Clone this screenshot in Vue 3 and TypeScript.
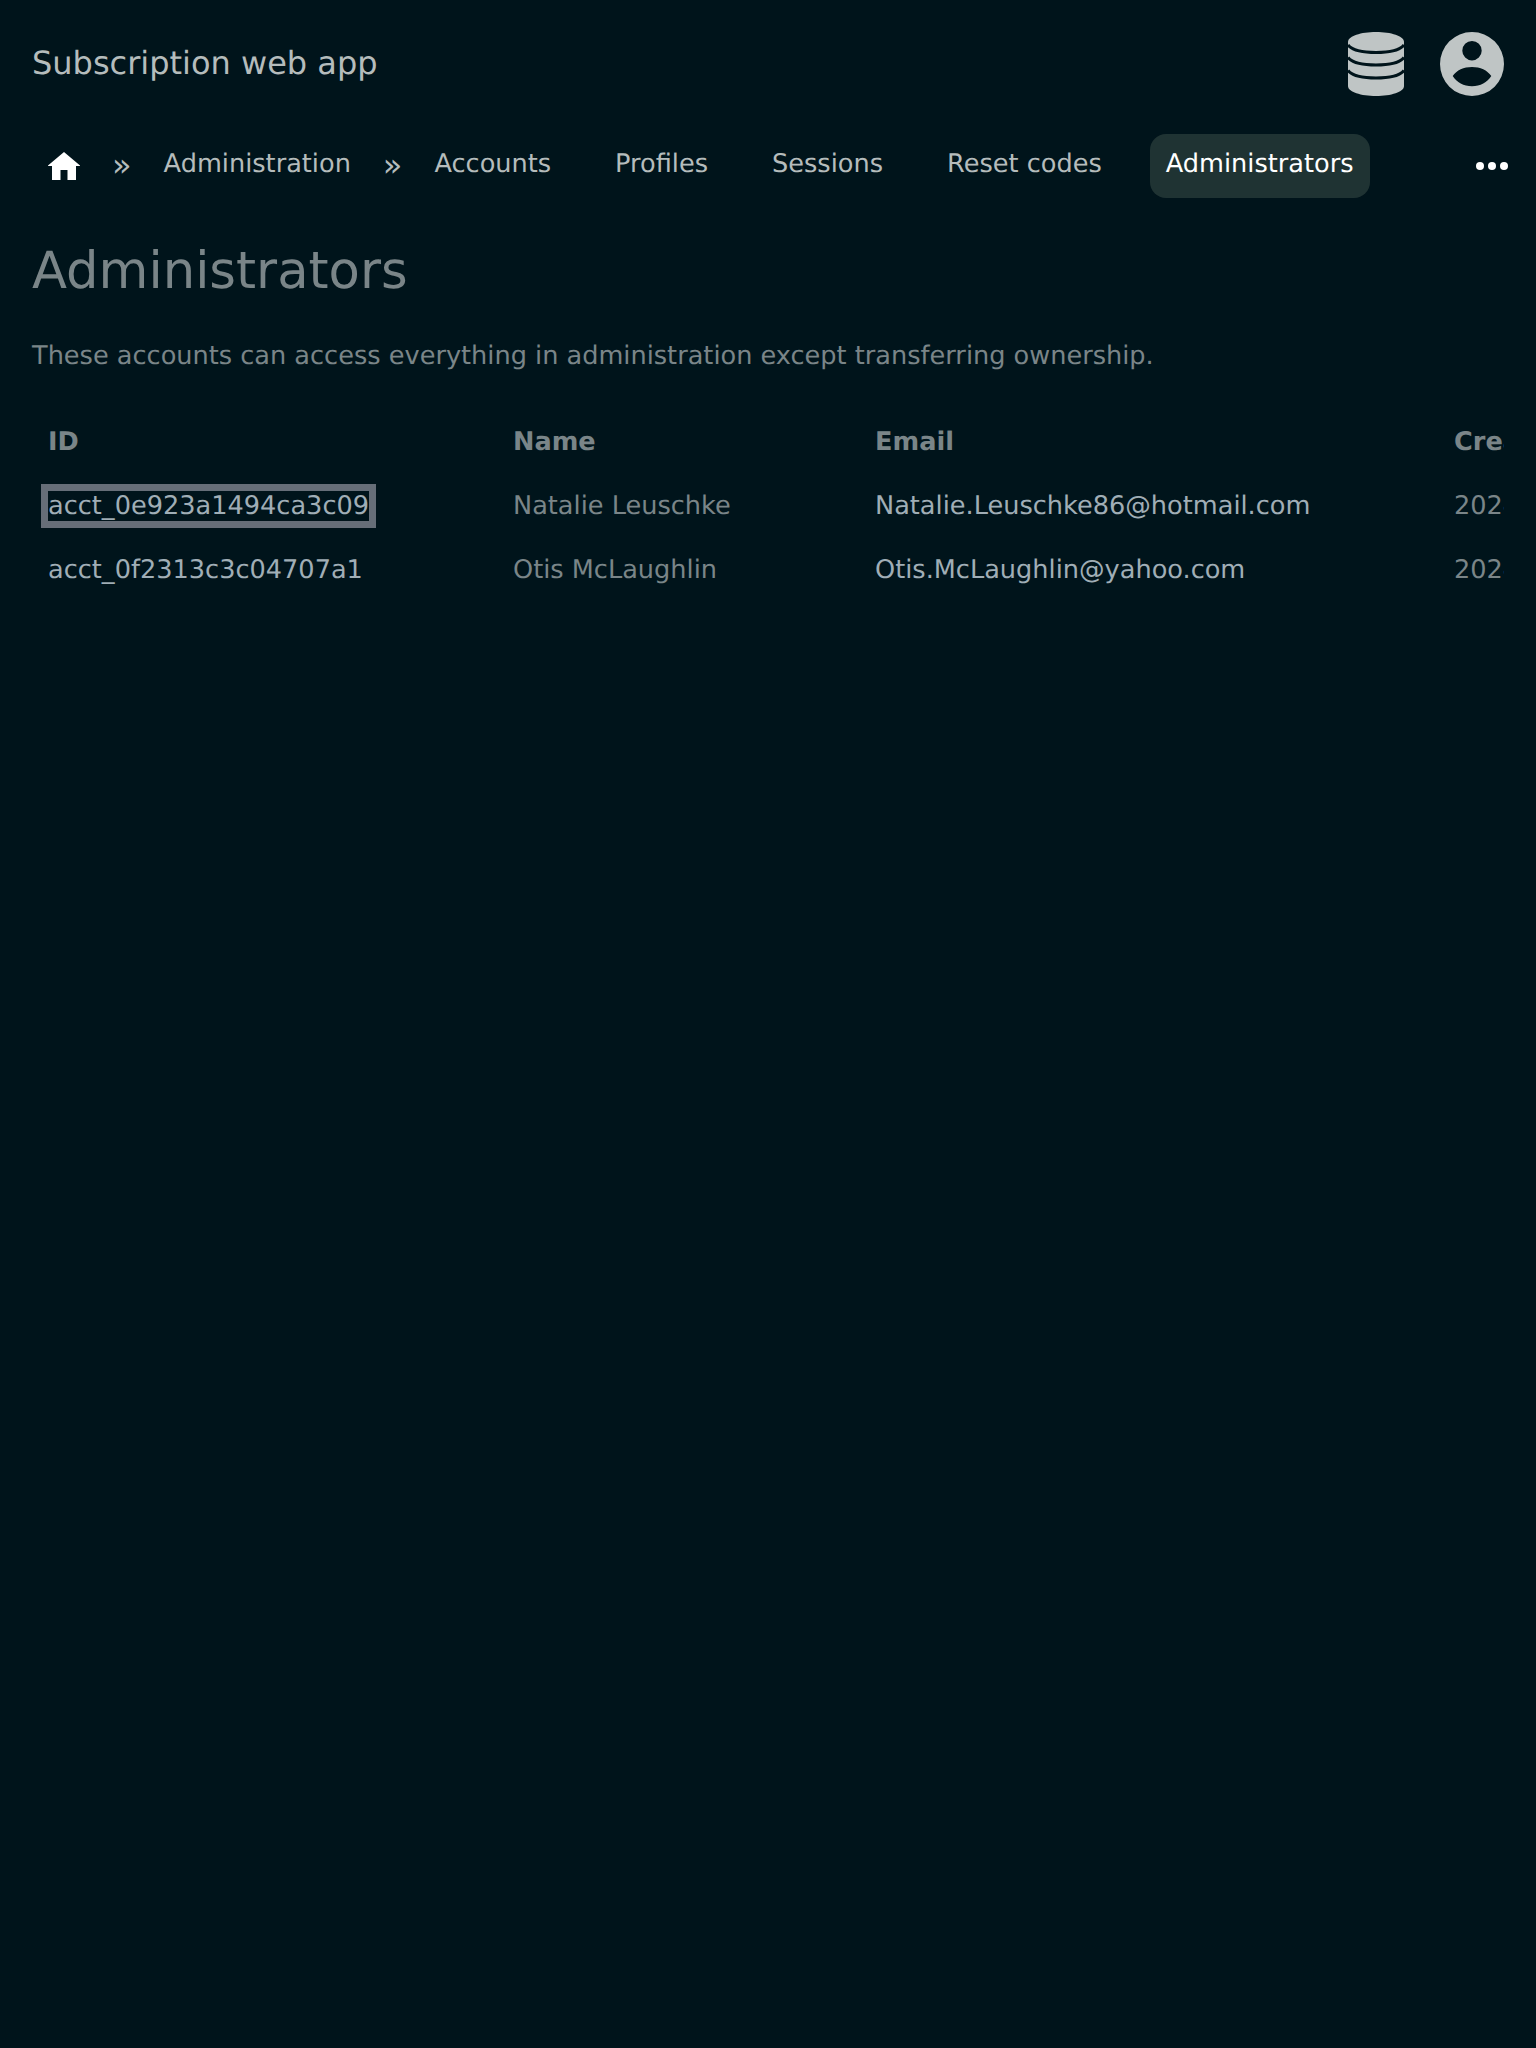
<script setup lang="ts">
interface Admin {
  id: string
  name: string
  email: string
  created: string
}

const tabs: string[] = ['Accounts', 'Profiles', 'Sessions', 'Reset codes', 'Administrators']

const admins: Admin[] = [
  { id: 'acct_0e923a1494ca3c09', name: 'Natalie Leuschke', email: 'Natalie.Leuschke86@hotmail.com', created: '2024-02-11' },
  { id: 'acct_0f2313c3c04707a1', name: 'Otis McLaughlin', email: 'Otis.McLaughlin@yahoo.com', created: '2024-06-27' },
]
</script>

<template>
  <div class="page">
    <header class="top">
      <span class="brand">Subscription web app</span>
      <div class="top-icons">
        <svg class="db" viewBox="0 0 56 64" aria-hidden="true">
          <path d="M0 10C0 4 13 0 28 0s28 4 28 10v44c0 6-13 10-28 10S0 60 0 54z" />
          <path class="db-line" d="M0 13c4 5 15 7.500 28 7.500s24-2.500 28-7.500" />
          <path class="db-line" d="M0 25.500c4 5 15 7.500 28 7.500s24-2.500 28-7.500" />
          <path class="db-line" d="M0 38.500c4 5 15 7.500 28 7.500s24-2.500 28-7.500" />
        </svg>
        <svg class="user" viewBox="0 0 64 64" aria-hidden="true">
          <path
            fill-rule="evenodd"
            d="M32 0a32 32 0 1 1 0 64a32 32 0 1 1 0-64zM32 9a9.700 9.700 0 1 0 0 19.400a9.700 9.700 0 1 0 0-19.400zM12.700 44c4 6.500 11 10.300 19.300 10.300s15.300-3.800 19.300-10.300c-4-5.800-11-9-19.300-9s-15.300 3.200-19.300 9z"
          />
        </svg>
      </div>
    </header>

    <nav class="nav">
      <a class="tab home" href="#">
        <svg viewBox="0 0 32 28" aria-hidden="true">
          <path d="M16 0L32 13.500V14H28V28H19.500V18H12.500V28H4V14H0V13.500z" />
        </svg>
      </a>
      <span class="sep">»</span>
      <a class="tab" href="#">Administration</a>
      <span class="sep">»</span>
      <a
        v-for="tab in tabs"
        :key="tab"
        class="tab"
        :class="{ active: tab === 'Administrators' }"
        href="#"
      >{{ tab }}</a>
      <span class="more"><i></i><i></i><i></i></span>
    </nav>

    <main class="content">
      <h1>Administrators</h1>
      <p>These accounts can access everything in administration except transferring ownership.</p>
      <div class="table-wrap">
        <table>
          <colgroup>
            <col class="col-id" />
            <col class="col-name" />
            <col class="col-email" />
            <col class="col-created" />
          </colgroup>
          <thead>
            <tr>
              <th>ID</th>
              <th>Name</th>
              <th>Email</th>
              <th>Created</th>
            </tr>
          </thead>
          <tbody>
            <tr v-for="(admin, i) in admins" :key="admin.id">
              <td><a class="id" :class="{ focused: i === 0 }" href="#">{{ admin.id }}</a></td>
              <td class="muted">{{ admin.name }}</td>
              <td><a class="id" href="#">{{ admin.email }}</a></td>
              <td class="muted">{{ admin.created }}</td>
            </tr>
          </tbody>
        </table>
      </div>
    </main>
  </div>
</template>

<style>
html,
body {
  margin: 0;
  background: #00141b;
}
</style>

<style scoped>
.page {
  min-height: 2048px;
  background: #00141b;
  font-family: "DejaVu Sans", sans-serif;
  font-size: 25.6px;
  color: #b5bcbc;
  text-rendering: geometricPrecision;
}

.top {
  display: flex;
  align-items: center;
  justify-content: space-between;
  height: 128px;
  padding: 0 32px;
}

.brand {
  margin-top: -2px;
  font-size: 32px;
}

.top-icons {
  display: flex;
  align-items: center;
  gap: 36px;
}

.top-icons svg {
  display: block;
  height: 64px;
  fill: #bfc5c5;
}

.db {
  width: 56px;
}

.db-line {
  fill: none;
  stroke: #00141b;
  stroke-width: 3;
}

.user {
  width: 64px;
}

.nav {
  position: relative;
  display: flex;
  align-items: center;
  height: 64px;
  margin-top: 6px;
  padding: 0 32px;
}

.sep {
  margin: -2px 16px 0;
  font-size: 32px;
}

.tab {
  padding: 0 16px 4px;
  border-radius: 16px;
  color: #b5bcbc;
  text-decoration: none;
  line-height: 60px;
}

.tab + .tab {
  margin-left: 32px;
}

.tab.active {
  background: #1f3333;
  color: #fff;
}

.home {
  display: block;
  width: 32px;
  height: 28px;
  padding: 0 16px;
}

.home svg {
  display: block;
  fill: #fff;
}

.more {
  position: absolute;
  top: 28px;
  right: 28px;
  display: flex;
  gap: 4px;
}

.more i {
  width: 8px;
  height: 8px;
  border-radius: 50%;
  background: #fff;
}

.content {
  padding: 0 32px;
}

h1 {
  margin: 41px 0 0;
  font-size: 51.2px;
  font-weight: 400;
  line-height: 64px;
  color: #7a8588;
}

p {
  margin: 35px 0 0;
  line-height: 36px;
  color: #7a8588;
}

.table-wrap {
  margin-top: 36px;
  overflow: hidden;
}

table {
  width: 1600px;
  table-layout: fixed;
  border-collapse: collapse;
}

.col-id {
  width: 465px;
}

.col-name {
  width: 362px;
}

.col-email {
  width: 579px;
}

th,
td {
  height: 64px;
  padding: 0 16px;
  text-align: left;
  white-space: nowrap;
}

th {
  font-weight: 700;
  color: #7a8588;
}

td.muted {
  color: #7a8588;
}

.id {
  color: #a0aeb6;
  text-decoration: none;
}

.focused {
  outline: 7px solid #666e78;
}
</style>
